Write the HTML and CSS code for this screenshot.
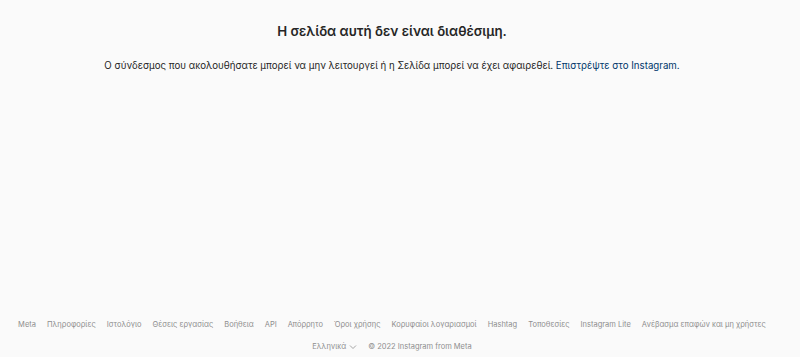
FILE: index.html
```html
<!DOCTYPE html>
<html lang="el">
<head>
    <meta charset="UTF-8">
    <meta name="viewport" content="width=device-width, initial-scale=1.0">
    <title>Instagram</title>
    <link rel="stylesheet" href="styles.css">
</head>
<body>
    <div class="page">
        <main class="content">
            <h2 class="title">Η σελίδα αυτή δεν είναι διαθέσιμη.</h2>
            <p class="desc">Ο σύνδεσμος που ακολουθήσατε μπορεί να μην λειτουργεί ή η Σελίδα μπορεί να έχει αφαιρεθεί. <a href="#" class="back">Επιστρέψτε στο Instagram.</a></p>
        </main>

        <footer class="footer">
            <div class="links">
                <a href="#">Meta</a>
                <a href="#">Πληροφορίες</a>
                <a href="#">Ιστολόγιο</a>
                <a href="#">Θέσεις εργασίας</a>
                <a href="#">Βοήθεια</a>
                <a href="#">API</a>
                <a href="#">Απόρρητο</a>
                <a href="#">Όροι χρήσης</a>
                <a href="#">Κορυφαίοι λογαριασμοί</a>
                <a href="#">Hashtag</a>
                <a href="#">Τοποθεσίες</a>
                <a href="#">Instagram Lite</a>
                <a href="#">Ανέβασμα επαφών και μη χρήστες</a>
            </div>
            <div class="bottom">
                <span class="lang">Ελληνικά
                    <svg width="8" height="8" viewBox="0 0 8 8"><path d="M1 2.5 4 5.5 7 2.5" fill="none" stroke="#8e8e8e" stroke-width="0.8"/></svg>
                </span>
                <span>© 2022 Instagram from Meta</span>
            </div>
        </footer>
    </div>
</body>
</html>
```

FILE: styles.css
```css
*{ margin: 0; padding: 0; box-sizing: border-box;}
body{ background: #fafafa; font-family: Inter, "Liberation Sans", sans-serif; color: #262626;}

.page{ min-height: 100vh; display: flex; flex-direction: column; padding-right: 16px;}

.content{ flex: 1; text-align: center; padding-top: 22px;}
.title{ font-size: 13.3px; font-weight: 600; line-height: 18px;}
.desc{ font-size: 9.7px; line-height: 13px; margin-top: 19px;}
.back{ color: #00376b; text-decoration: none;}

.footer{ padding: 0 4px 5px; font-size: 7.5px; line-height: 11px; color: #8e8e8e;}
.links{ display: flex; flex-wrap: wrap; justify-content: center; margin-bottom: 11px;}
.links a{ color: #8e8e8e; text-decoration: none; margin: 0 5.5px;}
.bottom{ display: flex; justify-content: center; gap: 11px;}
.lang{ display: flex; align-items: center; gap: 3px;}
```
